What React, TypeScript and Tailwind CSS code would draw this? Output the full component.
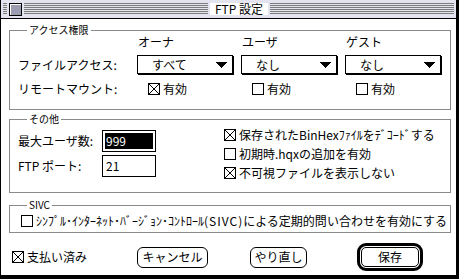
import React from "react";

const FONT = '"Noto Sans CJK JP", "Noto Sans", sans-serif';

function Check({ checked }: { checked?: boolean }) {
  return (
    <svg width="12" height="12" viewBox="0 0 12 12" shapeRendering="crispEdges" className="shrink-0 block">
      <rect x="0.5" y="0.5" width="11" height="11" fill="white" stroke="black" />
      {checked && <path d="M1 1L11 11M11 1L1 11" stroke="black" strokeWidth="1" />}
    </svg>
  );
}

function CheckLabel({ checked, children }: { checked?: boolean; children: React.ReactNode }) {
  return (
    <div className="flex items-center gap-[3px] h-[12px] whitespace-nowrap">
      <Check checked={checked} />
      <span className="leading-[12px]">{children}</span>
    </div>
  );
}

function Popup({ value }: { value: string }) {
  return (
    <div className="w-[96px] h-[19px] border border-black bg-white shadow-[1px_1px_0_#000] flex items-center justify-between pl-[14px] pr-[5px]">
      <span className="leading-[12px]">{value}</span>
      <svg width="11" height="6" viewBox="0 0 11 6" shapeRendering="crispEdges" className="block">
        <path d="M0 0H11L5.5 6Z" fill="black" />
      </svg>
    </div>
  );
}

function Group({ label, className, children }: { label: string; className?: string; children: React.ReactNode }) {
  return (
    <div className={`relative border border-[#8a8a8a] ${className ?? ""}`}>
      <span className="absolute left-[17px] top-[-6px] bg-white px-[2px] text-[10px] leading-[10px]">{label}</span>
      {children}
    </div>
  );
}

function Stripes({ className }: { className?: string }) {
  return (
    <div
      className={`h-[12px] bg-[repeating-linear-gradient(to_bottom,#7c7c7c_0px,#7c7c7c_1px,#e4e4f0_1px,#e4e4f0_2px)] ${className ?? ""}`}
    />
  );
}

export default function App() {
  return (
    <div className="w-[459px] h-[279px] bg-black overflow-hidden text-black text-[12px]" style={{ fontFamily: FONT }}>
      <div className="ml-[1px] w-[455px] h-[275px] bg-white flex flex-col">
        {/* Title bar */}
        <div className="h-[19px] border-b border-black bg-[#e4e4f0] flex items-center pl-[2px] pr-[2px] gap-[2px]">
          <Stripes className="w-[4px]" />
          <div className="w-[13px] h-[13px] border border-black bg-[#9c9cb0] shadow-[inset_1px_1px_0_#ffffff]" />
          <Stripes className="flex-1" />
          <span className="px-[5px] leading-[12px] bg-white">FTP 設定</span>
          <Stripes className="flex-1" />
        </div>

        <div className="flex flex-col pl-[8px] pr-[5px]">
          {/* アクセス権限 */}
          <Group label="アクセス権限" className="mt-[11px] h-[80px]">
            <div className="grid grid-cols-[119px_104px_104px_104px] pl-[8px] pt-[5px]">
              <div className="h-[12px]" />
              <div className="h-[12px] leading-[12px] pl-[1px]">オーナ</div>
              <div className="h-[12px] leading-[12px] pl-[1px]">ユーザ</div>
              <div className="h-[12px] leading-[12px] pl-[1px]">ゲスト</div>

              <div className="h-[20px] mt-[7px] flex items-center leading-[12px]">ファイルアクセス:</div>
              <div className="mt-[7px]"><Popup value="すべて" /></div>
              <div className="mt-[7px]"><Popup value="なし" /></div>
              <div className="mt-[7px]"><Popup value="なし" /></div>

              <div className="h-[12px] mt-[8px] leading-[12px]">リモートマウント:</div>
              <div className="mt-[8px] pl-[11px]"><CheckLabel checked>有効</CheckLabel></div>
              <div className="mt-[8px] pl-[11px]"><CheckLabel>有効</CheckLabel></div>
              <div className="mt-[8px] pl-[11px]"><CheckLabel>有効</CheckLabel></div>
            </div>
          </Group>

          {/* その他 */}
          <Group label="その他" className="mt-[9px] h-[74px]">
            <div className="flex">
              <div className="w-[214px] pl-[8px] pt-[10px] flex flex-col gap-[3px]">
                <div className="flex items-center h-[22px]">
                  <span className="w-[84px] leading-[12px]">最大ユーザ数:</span>
                  <div className="w-[54px] h-[22px] border border-black p-[2px]">
                    <div className="h-full bg-black text-white flex items-center pl-[1px] leading-[12px]">999</div>
                  </div>
                </div>
                <div className="flex items-center h-[22px]">
                  <span className="w-[84px] leading-[12px]">FTP ポート:</span>
                  <div className="w-[54px] h-[22px] border border-black p-[2px] flex items-center">
                    <span className="pl-[1px] leading-[12px]">21</span>
                  </div>
                </div>
              </div>
              <div className="pt-[9px] flex flex-col gap-[7px]">
                <CheckLabel checked>保存されたBinHexﾌｧｲﾙをﾃﾞｺｰﾄﾞする</CheckLabel>
                <CheckLabel>初期時.hqxの追加を有効</CheckLabel>
                <CheckLabel checked>不可視ファイルを表示しない</CheckLabel>
              </div>
            </div>
          </Group>

          {/* SIVC */}
          <Group label="SIVC" className="mt-[12px] h-[28px]">
            <div className="pl-[11px] pt-[9px]">
              <CheckLabel>
                ｼﾝﾌﾟﾙ･ｲﾝﾀｰﾈｯﾄ･ﾊﾞｰｼﾞｮﾝ･ｺﾝﾄﾛｰﾙ<span className="tracking-[1px]">(SIVC)</span>による定期的問い合わせを有効にする
              </CheckLabel>
            </div>
          </Group>

          {/* Bottom buttons */}
          <div className="mt-[10px] h-[28px] flex items-center">
            <div className="w-[128px] pl-[3px]">
              <CheckLabel checked>支払い済み</CheckLabel>
            </div>
            <div className="w-[71px] h-[21px] border border-black rounded-[6px] flex items-center justify-center leading-[12px]">キャンセル</div>
            <div className="ml-[42px] w-[57px] h-[21px] border border-black rounded-[6px] flex items-center justify-center leading-[12px]">やり直し</div>
            <div className="ml-[50px] w-[66px] h-[28px] border-[3px] border-black rounded-[9px] p-[1px]">
              <div className="w-full h-full border border-black rounded-[5px] flex items-center justify-center leading-[12px]">保存</div>
            </div>
          </div>
        </div>
      </div>
    </div>
  );
}
